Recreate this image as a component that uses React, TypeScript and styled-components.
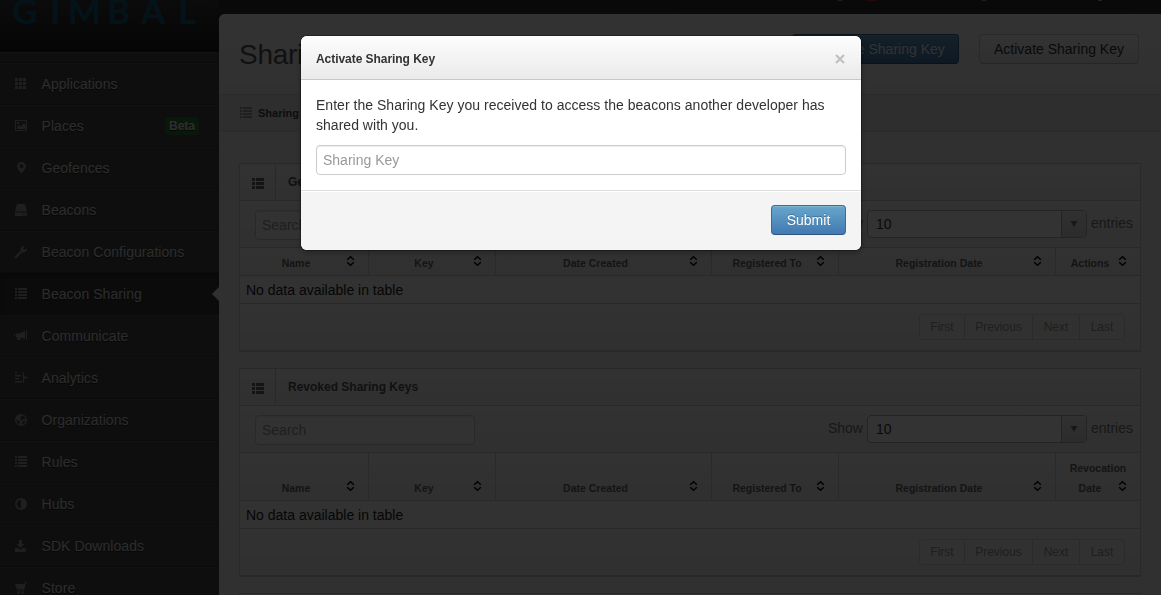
import React from "react";
import styled, { createGlobalStyle, css } from "styled-components";

const GlobalStyle = createGlobalStyle`
  * { box-sizing: border-box; }
  html, body { margin: 0; height: 100%; overflow: hidden; background: #303030; }
  body, input, button { font-family: "Liberation Sans", Arial, sans-serif; font-size: 14px; line-height: 20px; }
`;

const Page = styled.div`
  position: relative;
  display: flex;
  width: 1161px;
  height: 595px;
  overflow: hidden;
  background: linear-gradient(#3a3a3a 0, #303030 14px);
`;

/* ---------- sidebar ---------- */

const Sidebar = styled.aside`
  width: 219px;
  flex: none;
  background: #464646;
`;

const Brand = styled.div`
  height: 52px;
  margin-bottom: 11px;
  background: linear-gradient(#3a3a3a, #1c1c1c);
  border-bottom: 1px solid #191919;
  box-shadow: 0 1px 0 #5c5c5c;
  svg { display: block; }
`;

const Nav = styled.nav`
  display: flex;
  flex-direction: column;
  border-top: 1px solid #323232;
  margin-top: -1px;
`;

const NavItem = styled.a<{ $active?: boolean }>`
  position: relative;
  display: flex;
  align-items: center;
  height: 42px;
  flex: none;
  padding: 0 20px 0 14px;
  color: #dedede;
  border-top: 1px solid #505050;
  border-bottom: 1px solid #373737;
  text-shadow: 0 1px 0 #222;
  ${(p) =>
    p.$active &&
    css`
      background: #383838;
      border-top-color: #2a2a2a;
      box-shadow: inset 0 2px 4px rgba(0, 0, 0, 0.25);
      &::after {
        content: "";
        position: absolute;
        right: 0;
        top: 13px;
        border: 7px solid transparent;
        border-left-width: 0;
        border-right-color: #f0f0f0;
      }
    `}
`;

const NavLabel = styled.span`
  margin-left: 13.5px;
  flex: 1;
  letter-spacing: 0.05px;
`;

const Glyph = styled.svg`
  display: block;
  flex: none;
  width: 14px;
  height: 14px;
  fill: currentColor;
  color: #9a9a9a;
`;

const BetaTag = styled.span`
  height: 18px;
  padding: 0 4px;
  border-radius: 3px;
  background: #2f7a36;
  color: #e6e6e6;
  font-size: 12px;
  font-weight: bold;
  line-height: 18px;
`;

/* ---------- content ---------- */

const Content = styled.div`
  display: flex;
  flex-direction: column;
  width: 942px;
  background: linear-gradient(#2c2c2c, #343434 14px, #343434);
`;

const UserBar = styled.div`
  display: flex;
  width: 455px;
  height: 9px;
  flex: none;
  margin: 0 0 5px 457px;
  background: #2e2e2e;
  border-bottom: 1px solid #262626;
  border-radius: 0 0 4px 4px;
`;

const UserMark = styled.i<{ $left: number; $width: number; $color: string }>`
  width: ${(p) => p.$width}px;
  height: 1px;
  margin-left: ${(p) => p.$left}px;
  background: ${(p) => p.$color};
`;

const Main = styled.main`
  flex: 1;
  min-height: 0;
  overflow: hidden;
  background: #f0f0f0;
  border-top-left-radius: 6px;
`;

const TitleRow = styled.header`
  display: flex;
  align-items: flex-start;
  height: 80px;
  padding: 20px 22px 0 20px;
  background: linear-gradient(#fcfcfc, #f0f0f0);
`;

const Title = styled.h1`
  margin: 1px 0 0;
  flex: 1;
  font-size: 28px;
  line-height: 40px;
  font-weight: normal;
  letter-spacing: -0.3px;
  color: #555;
`;

const Button = styled.button<{ $primary?: boolean; $width: number }>`
  width: ${(p) => p.$width}px;
  height: 30px;
  padding: 0;
  border-radius: 4px;
  ${(p) =>
    p.$primary
      ? css`
          color: #fff;
          border: 1px solid #3a6a9c;
          border-bottom-color: #2d5580;
          background: linear-gradient(#67a6cc, #4279b1);
          box-shadow: inset 0 1px 0 rgba(255, 255, 255, 0.2);
          text-shadow: 0 -1px 0 rgba(0, 0, 0, 0.25);
        `
      : css`
          color: #333;
          border: 1px solid #cfcfcf;
          border-bottom-color: #b8b8b8;
          background: linear-gradient(#fff, #eaeaea);
        `}
`;

const HeaderButtons = styled.div`
  display: flex;
  gap: 20px;
`;

const Crumbs = styled.div`
  display: flex;
  align-items: center;
  height: 38px;
  padding-left: 20px;
  border: solid #d4d4d4;
  border-width: 1px 0;
  background: #e6e6e6;
  color: #555;
  font-size: 11px;
  font-weight: bold;
  span { margin-left: 5px; color: #444; }
`;

const Panels = styled.div`
  padding: 31px 20px 0;
`;

const Panel = styled.section`
  width: 902px;
  margin-bottom: 16px;
  border: 1px solid #cdcdcd;
  border-bottom: 2px solid #c6c6c6;
  background: #f9f9f9;
`;

const PanelHead = styled.div`
  display: flex;
  height: 37px;
  border-bottom: 1px solid #cdcdcd;
  background: linear-gradient(#fafafa, #ededed);
`;

const PanelIcon = styled.div`
  width: 36px;
  padding: 13px 0 0 11px;
  border-right: 1px solid #cdcdcd;
  svg { color: #666; }
`;

const PanelTitle = styled.h2`
  margin: 0;
  padding: 8px 12px;
  font-size: 12px;
  line-height: 20px;
  color: #555;
`;

const Controls = styled.div`
  display: flex;
  height: 47px;
  padding: 9px 7px 0 15px;
  border-bottom: 1px solid #cdcdcd;
  background: linear-gradient(#f8f8f8, #ededed);
  color: #777;
`;

const Field = styled.input`
  display: block;
  height: 30px;
  padding: 4px 6px;
  border: 1px solid #ccc;
  border-radius: 4px;
  background: #fff;
  box-shadow: inset 0 1px 1px rgba(0, 0, 0, 0.075);
  outline: none;
  &::placeholder { color: #999; opacity: 1; }
`;

const SearchField = styled(Field)`
  width: 220px;
  background: #fbfbfb;
`;

const Length = styled.div`
  display: flex;
  margin-left: auto;
  height: 28px;
  line-height: 27px;
`;

const Select = styled.div`
  display: flex;
  justify-content: space-between;
  width: 220px;
  height: 28px;
  margin: 0 4px;
  padding-left: 8px;
  border: 1px solid #b4b4b4;
  border-radius: 4px;
  background: #fff;
  color: #333;
  overflow: hidden;
`;

const SelectArrow = styled.span`
  display: flex;
  align-items: center;
  justify-content: center;
  width: 25px;
  border-left: 1px solid #b4b4b4;
  background: linear-gradient(#f2f2f2, #d8d8d8);
  svg { display: block; }
`;

const HeadRow = styled.div<{ $tall?: boolean }>`
  display: grid;
  grid-template-columns: 129px 127px 216px 127px 217px 84px;
  height: ${(p) => (p.$tall ? 48 : 28)}px;
  border-bottom: 1px solid #cdcdcd;
  background: linear-gradient(#fafafa, #ededed);
`;

const HeadCell = styled.div`
  display: flex;
  flex-direction: column;
  justify-content: flex-end;
  padding-bottom: 2px;
  border-right: 1px solid #d2d2d2;
  color: #666;
  font-size: 10.5px;
  font-weight: bold;
  text-align: center;
  line-height: 20px;
  &:last-child { border-right: 0; }
`;

const HeadLine = styled.div`
  display: flex;
  height: 20px;
  padding-right: 13px;
  span { flex: 1; margin-right: -6px; white-space: nowrap; }
  svg { display: block; margin-top: 2px; }
`;

const EmptyRow = styled.div`
  height: 28px;
  padding: 4px 6px 0;
  border-bottom: 1px solid #cdcdcd;
  color: #222;
  background: #f9f9f9;
`;

const PanelFoot = styled.div`
  display: flex;
  justify-content: flex-end;
  height: 46px;
  padding: 10px 15px 0 0;
  background: linear-gradient(#f8f8f8, #ededed);
`;

const Pager = styled.div`
  display: flex;
  height: 26px;
  border: 1px solid #d4d4d4;
  border-radius: 4px;
  background: #f5f5f5;
`;

const PageLink = styled.span<{ $width: number }>`
  width: ${(p) => p.$width}px;
  text-align: center;
  font-size: 12px;
  line-height: 24px;
  color: #999;
  & + & { border-left: 1px solid #d0d0d0; }
`;

/* ---------- dialog ---------- */

const Backdrop = styled.div`
  position: fixed;
  inset: 0;
  background: rgba(0, 0, 0, 0.8);
`;

const Dialog = styled.div`
  position: fixed;
  left: 301px;
  top: 36px;
  width: 560px;
  height: 214px;
  border-radius: 6px;
  overflow: hidden;
  background: #fff;
  box-shadow: 0 0 0 1px rgba(0, 0, 0, 0.3), 0 3px 7px rgba(0, 0, 0, 0.3);
`;

const DialogHead = styled.div`
  display: flex;
  align-items: center;
  justify-content: space-between;
  height: 44px;
  padding: 0 15px;
  border-bottom: 1px solid #c8c8c8;
  background: linear-gradient(#fdfdfd, #eaeaea);
  h3 { margin: 3px 0 0; font-size: 12px; line-height: 20px; color: #333; letter-spacing: -0.05px; }
`;

const Close = styled.svg`
  display: block;
  width: 10px;
  height: 10px;
  margin: 3px 1px 0 0;
`;

const DialogBody = styled.div`
  height: 110px;
  padding: 15px;
  color: #333;
  p { margin: 0 0 10px; letter-spacing: 0.025px; }
  input { width: 530px; }
`;

const DialogFoot = styled.div`
  display: flex;
  justify-content: flex-end;
  height: 60px;
  padding: 14px 15px 0 0;
  border-top: 1px solid #ddd;
  background: #f4f4f4;
  box-shadow: inset 0 1px 0 #fff;
`;

/* ---------- icons ---------- */

const icons: Record<string, React.ReactNode> = {
  grid: <path d="M1 1h3v3H1zM5 1h3v3H5zM9 1h3v3H9zM1 5h3v3H1zM5 5h3v3H5zM9 5h3v3H9zM1 9h3v3H1zM5 9h3v3H5zM9 9h3v3H9z" />,
  picture: <path fillRule="evenodd" d="M1 1h12v11H1zM2 2v9h10V2zM3 10V8l2-2 1.500 1.500L10 4l2 2.500V10zM3 3h2v2H3z" />,
  pin: <path fillRule="evenodd" d="M7.500 1A4.300 4.300 0 0 1 12 5.300C12 8 9 10 7.500 13 6 10 3 8 3 5.300A4.300 4.300 0 0 1 7.500 1zM7.500 3.300a2 2 0 1 0 0 4 2 2 0 0 0 0-4z" />,
  drive: <path fillRule="evenodd" d="M3 1h8l2 7.500H1zM1 9.500h12V13H1zM9 10.700v1h1v-1zM11 10.700v1h1v-1z" />,
  wrench: <path d="M13 3.200a3.600 3.600 0 0 1-4.800 4L3 12.600a1.200 1.200 0 0 1-1.900-1.700L6.700 5.500A3.500 3.500 0 0 1 11 1.200L9 3.300 10.200 5l2.800-1.800z" />,
  list: <path d="M1 1h2v2H1zM4 1h9v2H4zM1 4h2v2H1zM4 4h9v2H4zM1 7h2v2H1zM4 7h9v2H4zM1 10h2v2H1zM4 10h9v2H4z" />,
  thlist: <path d="M1 1h3v3H1zM5 1h8v3H5zM1 5h3v3H1zM5 5h8v3H5zM1 9h3v3H1zM5 9h8v3H5z" />,
  horn: <path d="M0 5h1v2H0zM2 4.500h3L11 2v8L6 8.500V10h1v1H3.500L3 8H2zM12 1h1v10h-1z" />,
  chart: <path d="M1 1h2v1.500H1zM1 4h6v1.500H1zM1 7h4v1.500H1zM1 10h7v1.500H1zM9 1h1v11H9zM10 6l2-1.500V6h2v1h-2v1.500L10 7z" />,
  globe: <path fillRule="evenodd" d="M7 1a6 6 0 1 0 0 12A6 6 0 0 0 7 1zM9.500 2.500 11.500 5 11 6.500 9 6 7.500 7.500 6 7 7 5.500 6 4.500 7.500 3zM2.300 6l2.200 2 1.500 1-.5 2.500L3.200 10zM8.500 8.500l2.700-.5L10 11l-1.500.5z" />,
  contrast: <path fillRule="evenodd" d="M7 1a6 6 0 1 0 0 12A6 6 0 0 0 7 1zM7 3v8a4 4 0 0 1 0-8z" />,
  download: <path fillRule="evenodd" d="M5 1h3v4h2.500l-4 4-4-4H5zM1 9h3l2.500 2L9 9h3v4H1zM10 10.500v1h1v-1z" />,
  cart: <path d="M1 3h9.500L11 1h2v1h-1.200L10 9.500H3.500L3 9h6l.3-.8H3zM3 10.500h7v1H9.500V13H8v-1.500H5V13H3.500z" />,
};

const Icon = ({ name }: { name: string }) => <Glyph viewBox="0 0 14 14">{icons[name]}</Glyph>;

const SortIcon = () => (
  <svg width="9" height="12" viewBox="0 0 9 12" fill="none" stroke="#000" strokeWidth="1.500">
    <path d="M1.200 4.700 4.500 1.700 7.800 4.700M1.200 7.300l3.300 3 3.300-3" />
  </svg>
);

/* ---------- data ---------- */

const navItems = [
  { label: "Applications", icon: "grid" },
  { label: "Places", icon: "picture", beta: true },
  { label: "Geofences", icon: "pin" },
  { label: "Beacons", icon: "drive" },
  { label: "Beacon Configurations", icon: "wrench" },
  { label: "Beacon Sharing", icon: "list", active: true },
  { label: "Communicate", icon: "horn" },
  { label: "Analytics", icon: "chart" },
  { label: "Organizations", icon: "globe" },
  { label: "Rules", icon: "list" },
  { label: "Hubs", icon: "contrast" },
  { label: "SDK Downloads", icon: "download" },
  { label: "Store", icon: "cart" },
];

const baseColumns = ["Name", "Key", "Date Created", "Registered To", "Registration Date"];

const KeyPanel = ({ title, lastColumn }: { title: string; lastColumn: string[] }) => (
  <Panel>
    <PanelHead>
      <PanelIcon><Icon name="thlist" /></PanelIcon>
      <PanelTitle>{title}</PanelTitle>
    </PanelHead>
    <Controls>
      <SearchField placeholder="Search" />
      <Length>
        Show
        <Select>
          10
          <SelectArrow>
            <svg width="8" height="6"><path d="M0.500 0h7L4 6z" fill="#777" /></svg>
          </SelectArrow>
        </Select>
        entries
      </Length>
    </Controls>
    <HeadRow $tall={lastColumn.length > 1}>
      {[...baseColumns.map((c) => [c]), lastColumn].map((lines) => (
        <HeadCell key={lines.join(" ")}>
          {lines.slice(0, -1).map((line) => <div key={line}>{line}</div>)}
          <HeadLine><span>{lines[lines.length - 1]}</span><SortIcon /></HeadLine>
        </HeadCell>
      ))}
    </HeadRow>
    <EmptyRow>No data available in table</EmptyRow>
    <PanelFoot>
      <Pager>
        <PageLink $width={44}>First</PageLink>
        <PageLink $width={68}>Previous</PageLink>
        <PageLink $width={47}>Next</PageLink>
        <PageLink $width={45}>Last</PageLink>
      </Pager>
    </PanelFoot>
  </Panel>
);

export default function App() {
  return (
    <>
      <GlobalStyle />
      <Page>
        <Sidebar>
          <Brand>
            <svg width="219" height="50">
              <text y="24" x="12 50 68 107 141 178" fontFamily="Lato, sans-serif" fontWeight="700" fontSize="35" fill="#12627d">GIMBAL</text>
              <text y="2" x="197" fontFamily="Lato, sans-serif" fontSize="6" fill="#12627d">TM</text>
            </svg>
          </Brand>
          <Nav>
            {navItems.map((item) => (
              <NavItem key={item.label} $active={item.active}>
                <Icon name={item.icon} />
                <NavLabel>{item.label}</NavLabel>
                {item.beta && <BetaTag>Beta</BetaTag>}
              </NavItem>
            ))}
          </Nav>
        </Sidebar>
        <Content>
          <UserBar>
            <UserMark $left={162} $width={4} $color="#aaa" />
            <UserMark $left={24} $width={11} $color="#a33" />
            <UserMark $left={105} $width={4} $color="#aaa" />
            <UserMark $left={112} $width={4} $color="#aaa" />
          </UserBar>
          <Main>
            <TitleRow>
              <Title>Sharing Keys</Title>
              <HeaderButtons>
                <Button $primary $width={167}>Generate Sharing Key</Button>
                <Button $width={160}>Activate Sharing Key</Button>
              </HeaderButtons>
            </TitleRow>
            <Crumbs><Icon name="list" /><span>Sharing Keys</span></Crumbs>
            <Panels>
              <KeyPanel title="Generated Sharing Keys" lastColumn={["Actions"]} />
              <KeyPanel title="Revoked Sharing Keys" lastColumn={["Revocation", "Date"]} />
              <Panel><PanelHead /></Panel>
            </Panels>
          </Main>
        </Content>
        <Backdrop />
        <Dialog role="dialog">
          <DialogHead>
            <h3>Activate Sharing Key</h3>
            <Close viewBox="0 0 10 10"><path d="M1 1l8 8M9 1L1 9" stroke="#c0c0c0" strokeWidth="2.200" /></Close>
          </DialogHead>
          <DialogBody>
            <p>Enter the Sharing Key you received to access the beacons another developer has shared with you.</p>
            <Field placeholder="Sharing Key" />
          </DialogBody>
          <DialogFoot><Button $primary $width={75}>Submit</Button></DialogFoot>
        </Dialog>
      </Page>
    </>
  );
}
